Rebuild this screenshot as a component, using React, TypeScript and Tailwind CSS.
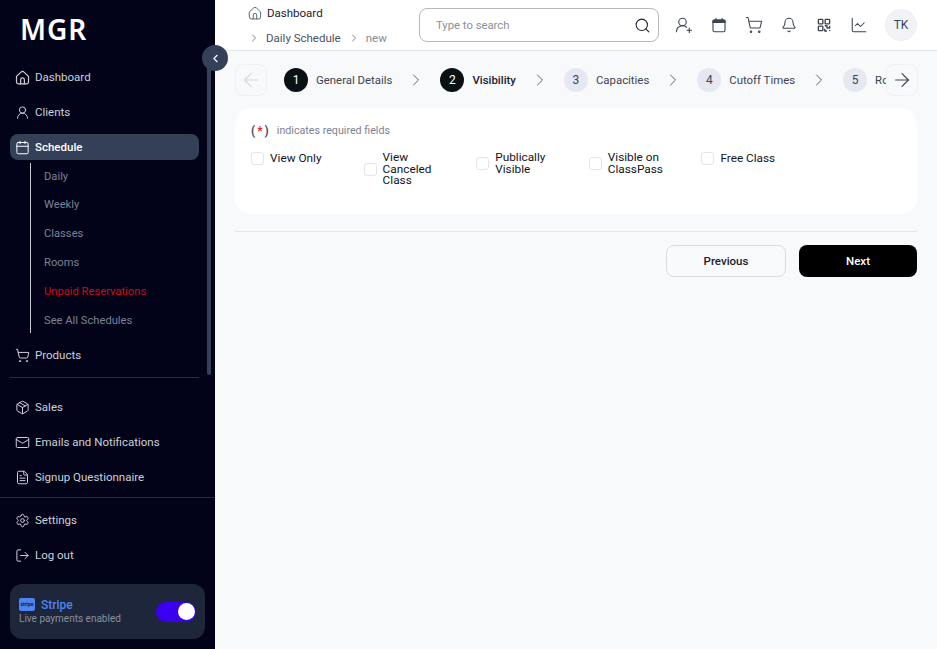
import React from 'react';
import {
  ArrowLeft,
  ArrowRight,
  Bell,
  Calendar,
  ChartLine,
  ChevronLeft,
  ChevronRight,
  FileText,
  LogOut,
  Mail,
  Package,
  Search,
  Settings,
  ShoppingCart,
  UserRound,
  UserRoundPlus,
} from 'lucide-react';

type IconProps = { size?: number; strokeWidth?: number; className?: string };

// rounded dome house with a door, closer to the reference than lucide's House
const HomeIcon = ({ size = 16, strokeWidth = 1.4, className }: IconProps) => (
  <svg width={size} height={size} viewBox="2 2 20 20" fill="none" stroke="currentColor" strokeWidth={strokeWidth} strokeLinecap="round" strokeLinejoin="round" className={className}>
    <path d="M4 10.5 10 4.8a3 3 0 0 1 4 0l6 5.7V18a2.5 2.5 0 0 1-2.5 2.5h-11A2.5 2.5 0 0 1 4 18z" />
    <path d="M9.5 20.5V15a2.5 2.5 0 0 1 5 0v5.5" />
  </svg>
);

const HeaderCalendar = () => (
  <svg width={18} height={18} viewBox="0 0 24 24" fill="none" stroke="currentColor" strokeWidth={1.5} strokeLinecap="round" strokeLinejoin="round">
    <rect x="4" y="5" width="16" height="16" rx="2" />
    <path d="M4 6h16v2.5H4z" fill="currentColor" />
    <path d="M8 3v3M16 3v3" />
  </svg>
);

const HeaderQr = () => (
  <svg width={18} height={18} viewBox="0 0 24 24" fill="none" stroke="currentColor" strokeWidth={1.8} strokeLinejoin="round">
    <rect x="4.5" y="4.5" width="6" height="6" rx="1" />
    <rect x="13.5" y="4.5" width="6" height="6" rx="1" />
    <rect x="4.5" y="13.5" width="6" height="6" rx="1" />
    <path d="M13 13h3v3h3.5v-3M13 17v3h3M19.5 18.5V20" />
  </svg>
);

const NavItem = ({ icon: Icon, label, active }: { icon: React.ElementType; label: string; active?: boolean }) => (
  <div className={`flex h-[26px] items-center gap-[5px] rounded-lg pl-[5px] text-[11.5px] ${active ? 'bg-[#334058] font-medium text-white' : 'text-[#ccd1db]'}`}>
    <Icon size={15} strokeWidth={1.6} className="shrink-0" />
    <span className="pt-[2px]">{label}</span>
  </div>
);

const subItems = ['Daily', 'Weekly', 'Classes', 'Rooms', 'Unpaid Reservations', 'See All Schedules'];

const Sidebar = () => (
  <aside className="relative flex h-[649px] w-[215px] shrink-0 flex-col bg-[#020318]">
    <div className='pl-[20px] pt-[10px] font-["Noto_Sans",sans-serif] text-[28px] font-semibold leading-[38px] tracking-[1px] text-white'>MGR</div>
    <nav className="mt-[16px] flex flex-col pl-[10px] pr-[16px]">
      <div className="flex flex-col gap-[9px]">
        <NavItem icon={HomeIcon} label="Dashboard" />
        <NavItem icon={UserRound} label="Clients" />
        <NavItem icon={Calendar} label="Schedule" active />
      </div>
      <div className="ml-[20px] mt-[3px] flex h-[170px] flex-col justify-center border-l border-[#c3c7d0] pl-[13px]">
        {subItems.map((item) => (
          <div key={item} className={`flex h-[28.8px] shrink-0 items-center pt-[2px] text-[11.2px] ${item === 'Unpaid Reservations' ? 'text-[#d0091c]' : 'text-[#7b8294]'}`}>
            {item}
          </div>
        ))}
      </div>
      <div className="mt-[9px]">
        <NavItem icon={ShoppingCart} label="Products" />
      </div>
      <div className="mt-[9px] border-t border-[#2a2d3d]" />
      <div className="mt-[16px] flex flex-col gap-[9px]">
        <NavItem icon={Package} label="Sales" />
        <NavItem icon={Mail} label="Emails and Notifications" />
        <NavItem icon={FileText} label="Signup Questionnaire" />
      </div>
    </nav>
    <div className="mt-[7px] border-t border-[#262a3e]" />
    <div className="mt-[9px] flex flex-col gap-[9px] pl-[10px] pr-[16px]">
      <NavItem icon={Settings} label="Settings" />
      <NavItem icon={LogOut} label="Log out" />
    </div>
    <div className="mx-[10px] mt-[16px] flex h-[55px] items-center justify-between rounded-xl bg-[#1e263b] pl-[9px] pr-[9px]">
      <div>
        <div className="flex items-center gap-[6px]">
          <span className="flex h-[13px] w-[16px] items-center justify-center rounded-[2px] bg-[#4f83f1] text-[5px] font-bold leading-none text-[#0f1b3d]">stripe</span>
          <span className="text-[12px] font-medium leading-[14px] text-[#4f83f1]">Stripe</span>
        </div>
        <div className="text-[10px] leading-[14px] text-[#8a90a0]">Live payments enabled</div>
      </div>
      <div className="flex h-[20px] w-[40px] items-center justify-end rounded-full bg-[#3c00f0] pr-[1px]">
        <span className="h-[17px] w-[17px] rounded-full bg-white" />
      </div>
    </div>
    {/* scrollbar thumb */}
    <div className="absolute left-[207px] top-[60px] h-[315px] w-[4px] rounded-full bg-[#334058]" />
    {/* collapse button */}
    <div className="absolute left-[202px] top-[45px] z-10 flex h-[26px] w-[26px] items-center justify-center rounded-full bg-[#334058] text-white">
      <ChevronLeft size={13} strokeWidth={2} />
    </div>
  </aside>
);

const Header = () => (
  <header className="flex h-[51px] shrink-0 items-center border-b border-[#e7e8ea] bg-white pl-[33px] pr-[18px]">
    <div className="w-[171px] text-[11.5px]">
      <div className="flex items-center gap-[5px] text-[#1b2130]">
        <HomeIcon size={14} strokeWidth={1.4} className="text-[#5b6270]" />
        <span className="pt-[2px]">Dashboard</span>
      </div>
      <div className="mt-[7px] flex items-center text-[#4b5262]">
        <ChevronRight size={12} strokeWidth={1.4} />
        <span className="ml-[6px]">Daily Schedule</span>
        <ChevronRight size={12} strokeWidth={1.4} className="ml-[7px]" />
        <span className="ml-[6px] text-[#868c99]">new</span>
      </div>
    </div>
    <div className="flex h-[34px] w-[240px] items-center justify-between rounded-lg border border-[#b5b8be] pl-[16px] pr-[7px]">
      <span className="pt-[2px] text-[11.3px] text-[#8b8f97]">Type to search</span>
      <Search size={17} strokeWidth={1.5} className="text-[#1b2130]" />
    </div>
    <div className="ml-[16px] flex items-center gap-[17px] text-[#3d4452]">
      <UserRoundPlus size={18} strokeWidth={1.5} />
      <HeaderCalendar />
      <ShoppingCart size={18} strokeWidth={1.4} />
      <Bell size={16} strokeWidth={1.6} className="mx-[1px]" />
      <HeaderQr />
      <ChartLine size={18} strokeWidth={1.4} />
    </div>
    <div className="ml-[17px] flex h-[32px] w-[32px] items-center justify-center rounded-full border border-[#eceef1] bg-[#f1f3f6] text-[12px] text-[#3d4452]">TK</div>
  </header>
);

const steps = [
  { n: 1, label: 'General Details', done: true },
  { n: 2, label: 'Visibility', done: true },
  { n: 3, label: 'Capacities', done: false },
  { n: 4, label: 'Cutoff Times', done: false },
  { n: 5, label: 'Rooms', done: false },
];

const Stepper = () => (
  <div className="flex items-center">
    <div className="flex h-[32px] w-[32px] shrink-0 items-center justify-center rounded-lg border border-[#eef0f3] text-[#d3d6dc]">
      <ArrowLeft size={22} strokeWidth={1.3} />
    </div>
    <div className="flex h-[32px] w-[619px] shrink-0 items-center overflow-hidden pl-[17px]">
      {steps.map((s) => (
        <React.Fragment key={s.n}>
          <span className={`flex h-[24px] w-[24px] shrink-0 items-center justify-center rounded-full text-[12px] ${s.done ? 'bg-[#0a1114] text-white' : 'bg-[#e5e8f0] text-[#3d4452]'}`}>{s.n}</span>
          <span className={`ml-[8px] shrink-0 whitespace-nowrap pt-[2px] text-[11.4px] ${s.n === 2 ? 'font-medium text-[#1b2130]' : 'text-[#3d4452]'}`}>{s.label}</span>
          <span className="flex h-[24px] w-[48px] shrink-0 items-center justify-center text-[#5b6270]">
            <ChevronRight size={20} strokeWidth={1.2} />
          </span>
        </React.Fragment>
      ))}
    </div>
    <div className="flex h-[32px] w-[32px] shrink-0 items-center justify-center rounded-lg border border-[#eef0f3] text-[#3d4452]">
      <ArrowRight size={22} strokeWidth={1.3} />
    </div>
  </div>
);

const checks = [['View Only'], ['View', 'Canceled', 'Class'], ['Publically', 'Visible'], ['Visible on', 'ClassPass'], ['Free Class']];

const VisibilityCard = () => (
  <section className="mt-[12px] h-[106px] rounded-2xl bg-white pl-[16px] pt-[16px]">
    <div className="flex h-[14px] items-center text-[10.7px] leading-[14px] text-[#7d8290]">
      <span className="text-[12px] font-semibold text-[#3d4452]">(<span className="px-[2px] text-[#e11d2e]">*</span>)</span>
      <span className="ml-[8px]">indicates required fields</span>
    </div>
    <div className="mt-[14px] flex items-start">
      {checks.map((lines) => (
        <label key={lines[0]} className="flex w-[112.6px] shrink-0 items-center gap-[6px] text-[11.8px] leading-[11.6px] text-[#10141f]">
          <span className="h-[13px] w-[13px] shrink-0 rounded-[3px] border border-[#e3e5e9] bg-white" />
          <span className="whitespace-nowrap">
            {lines.map((line) => (
              <span key={line} className="block">{line}</span>
            ))}
          </span>
        </label>
      ))}
    </div>
  </section>
);

export default function App() {
  return (
    <div className='flex h-[649px] w-[937px] overflow-hidden bg-[#f8f9fb] font-["Roboto",sans-serif]'>
      <Sidebar />
      <main className="flex min-w-0 flex-1 flex-col">
        <Header />
        <div className="pl-[20px] pr-[20px] pt-[13px]">
          <Stepper />
          <VisibilityCard />
          <div className="mt-[17px] border-t border-[#e6e7ea]" />
          <div className="mt-[13px] flex justify-end gap-[13px]">
            <button className="h-[32px] w-[120px] rounded-lg border border-[#d9dbe0] bg-[#f9fafb] pt-[2px] text-[11.5px] font-medium text-[#1b2130]">Previous</button>
            <button className="h-[32px] w-[118px] rounded-lg bg-black pt-[2px] text-[11.5px] font-medium text-white">Next</button>
          </div>
        </div>
      </main>
    </div>
  );
}
